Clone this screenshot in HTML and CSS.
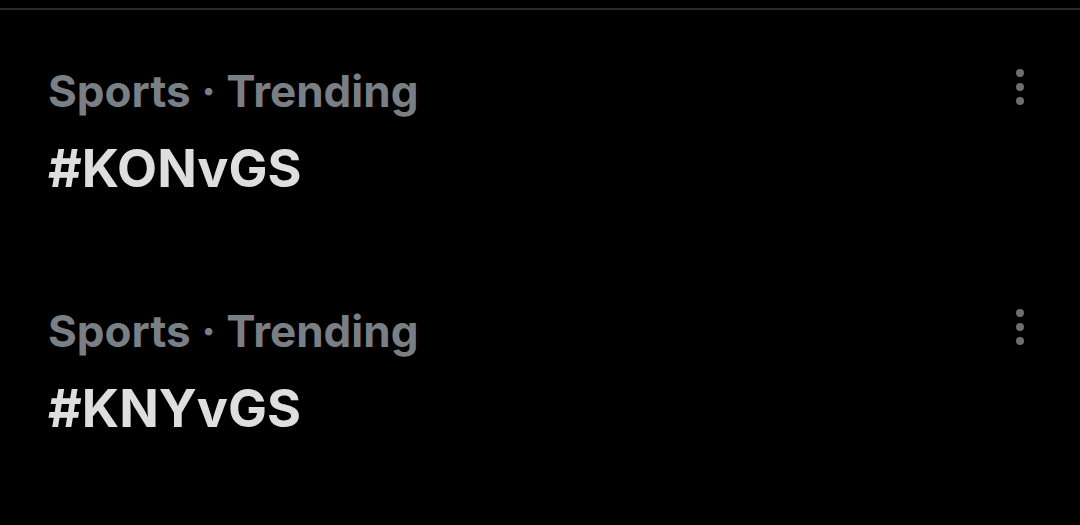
FILE: index.html
```html
<!DOCTYPE html>
<html>
<head>
<meta charset="utf-8">
<link rel="stylesheet" href="styles.css">
</head>
<body>
<div class="topbar"></div>
<ul class="trends">
  <li class="trend">
    <div class="info">
      <div class="meta">Sports · Trending</div>
      <div class="tag">#KONvGS</div>
    </div>
    <div class="more"><span></span><span></span><span></span></div>
  </li>
  <li class="trend">
    <div class="info">
      <div class="meta">Sports · Trending</div>
      <div class="tag">#KNYvGS</div>
    </div>
    <div class="more"><span></span><span></span><span></span></div>
  </li>
</ul>
</body>
</html>
```
FILE: styles.css
```css
html, body {
  margin: 0;
  padding: 0;
  background: #000;
  height: 100%;
  overflow: hidden;
}
body {
  font-family: Inter, "Liberation Sans", sans-serif;
  padding-top: 8px;
}
.topbar {
  height: 2px;
  background: #2a2a2c;
}
.trends {
  list-style: none;
  margin: 0;
  padding: 0;
}
.trend {
  display: flex;
  justify-content: space-between;
  align-items: flex-start;
  padding: 57px 56px 53px 48px;
}
.meta {
  color: #7a7f85;
  font-weight: 700;
  font-size: 44px;
  line-height: 48px;
}
.tag {
  color: #dedede;
  font-weight: 700;
  font-size: 52px;
  line-height: 56px;
  margin-top: 26px;
}
.more {
  display: flex;
  flex-direction: column;
  gap: 6px;
  padding-top: 2px;
}
.more span {
  width: 8px;
  height: 8px;
  border-radius: 50%;
  background: #6c6f72;
}
```
